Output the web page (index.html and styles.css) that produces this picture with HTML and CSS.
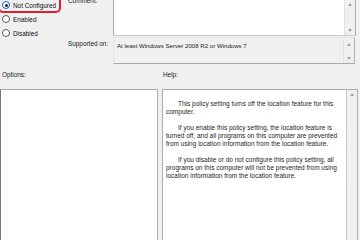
FILE: index.html
```html
<!DOCTYPE html>
<html>
<head>
<meta charset="utf-8">
<link rel="stylesheet" href="styles.css">
</head>
<body>
<div class="dlg">
  <div class="top">
    <div class="radios">
      <div class="radio on"><span class="dot"></span>Not Configured</div>
      <div class="radio"><span class="dot"></span>Enabled</div>
      <div class="radio"><span class="dot"></span>Disabled</div>
      <div class="mark"></div>
    </div>
    <div class="labels">
      <div class="lbl comment-lbl">Comment:</div>
      <div class="lbl supp-lbl">Supported on:</div>
    </div>
    <div class="fields">
      <div class="box comment">
        <div class="area"></div>
        <div class="sbar"><span class="up"></span><span class="down"></span></div>
      </div>
      <div class="box supported">
        <div class="area">At least Windows Server 2008 R2 or Windows 7</div>
        <div class="sbar"><span class="up"></span><span class="down"></span></div>
      </div>
    </div>
  </div>
  <div class="heads">
    <div class="opt-h">Options:</div>
    <div class="help-h">Help:</div>
  </div>
  <div class="panels">
    <div class="options"></div>
    <div class="help">
      <div class="text">
        <p>This policy setting turns off the location feature for this<br>computer.</p>
        <p>If you enable this policy setting, the location feature is<br>turned off, and all programs on this computer are prevented<br>from using location information from the location feature.</p>
        <p>If you disable or do not configure this policy setting, all<br>programs on this computer will not be prevented from using<br>location information from the location feature.</p>
      </div>
      <div class="sbar"><span class="up"></span></div>
    </div>
  </div>
</div>
</body>
</html>
```
FILE: styles.css
```css
html, body {
  margin: 0;
  padding: 0;
  background: #f0f0f0;
  width: 360px;
  height: 240px;
  overflow: hidden;
}
.dlg {
  font-family: "Liberation Sans", Arial, sans-serif;
  font-size: 6.4px;
  color: #000;
  width: 360px;
}
.top {
  display: grid;
  grid-template-columns: 68px 45px 244px;
  margin-top: -14px;
  height: 78px;
}
.radios {
  position: relative;
  padding-top: 17px;
}
.radio {
  display: flex;
  align-items: center;
  height: 14px;
  margin-top: -5px;
  margin-bottom: 5px;
  padding-left: 2px;
  gap: 3px;
  color: #111;
}
.dot {
  width: 6px;
  height: 6px;
  border: 1px solid #5a5a5a;
  border-radius: 50%;
  background: #fff;
  box-sizing: content-box;
  position: relative;
  flex: none;
}
.radio.on .dot {
  border-color: #0a64c8;
}
.radio.on .dot::after {
  content: "";
  position: absolute;
  left: 1.5px;
  top: 1.5px;
  width: 3px;
  height: 3px;
  border-radius: 50%;
  background: #1a1a1a;
}
.mark {
  position: absolute;
  left: -2px;
  top: 0;
  width: 63px;
  height: 27px;
  border: 2px solid #e0202e;
  border-radius: 5px;
  box-sizing: border-box;
}
.labels {
  display: flex;
  flex-direction: column;
}
.lbl { color: #222; }
.comment-lbl { margin-top: 11px; }
.supp-lbl { margin-top: 36px; }
.fields {
  display: flex;
  flex-direction: column;
  gap: 1px;
}
.box {
  display: flex;
  border: 1px solid #abadb3;
  box-sizing: border-box;
}
.comment {
  height: 50px;
  background: #fff;
  border-bottom-color: #c8c8c8;
  width: 243px;
}
.supported {
  height: 27px;
  width: 242px;
  background: #f0f0f0;
  border-color: #e3e3e3 #b4b4b4 #a8a8a8 #e3e3e3;
}
.area {
  flex: 1;
  padding: 4px 3px;
  color: #1a1a1a;
  font-size: 6.1px;
}
.sbar {
  width: 10px;
  background: #f0f0f0;
  border-left: 1px solid #e2e2e2;
  position: relative;
  flex: none;
}
.up, .down {
  position: absolute;
  left: 3px;
  width: 0;
  height: 0;
  border-left: 2.5px solid transparent;
  border-right: 2.5px solid transparent;
}
.up { border-bottom: 3px solid #a3a3a3; top: 3px; }
.down { border-top: 3px solid #a3a3a3; bottom: 3px; }
.comment .up { top: 16px; }
.supported .up { top: 5px; }
.heads {
  display: flex;
  height: 25px;
  padding-top: 7px;
  box-sizing: border-box;
  color: #222;
}
.opt-h { width: 161px; padding-left: 2px; box-sizing: border-box; }
.help-h { padding-left: 2px; }
.panels {
  display: flex;
  gap: 4px;
  height: 160px;
}
.options {
  width: 158px;
  background: #fff;
  border: 1px solid #adadad;
  border-left: 1px solid #777;
  box-sizing: border-box;
}
.help {
  width: 196px;
  display: flex;
  background: #fff;
  border: 1px solid #adadad;
  box-sizing: border-box;
}
.help .text {
  flex: 1;
  min-width: 0;
  padding: 10px 2px 0 3px;
  color: #1e1e1e;
  font-size: 6.5px;
  line-height: 8px;
  white-space: nowrap;
  overflow: hidden;
}
.help p {
  margin: 0 0 8px 0;
  text-indent: 12px;
}
.help .sbar {
  border-left: 1px solid #c8c8c8;
}
.help .up { top: 3px; }
```
